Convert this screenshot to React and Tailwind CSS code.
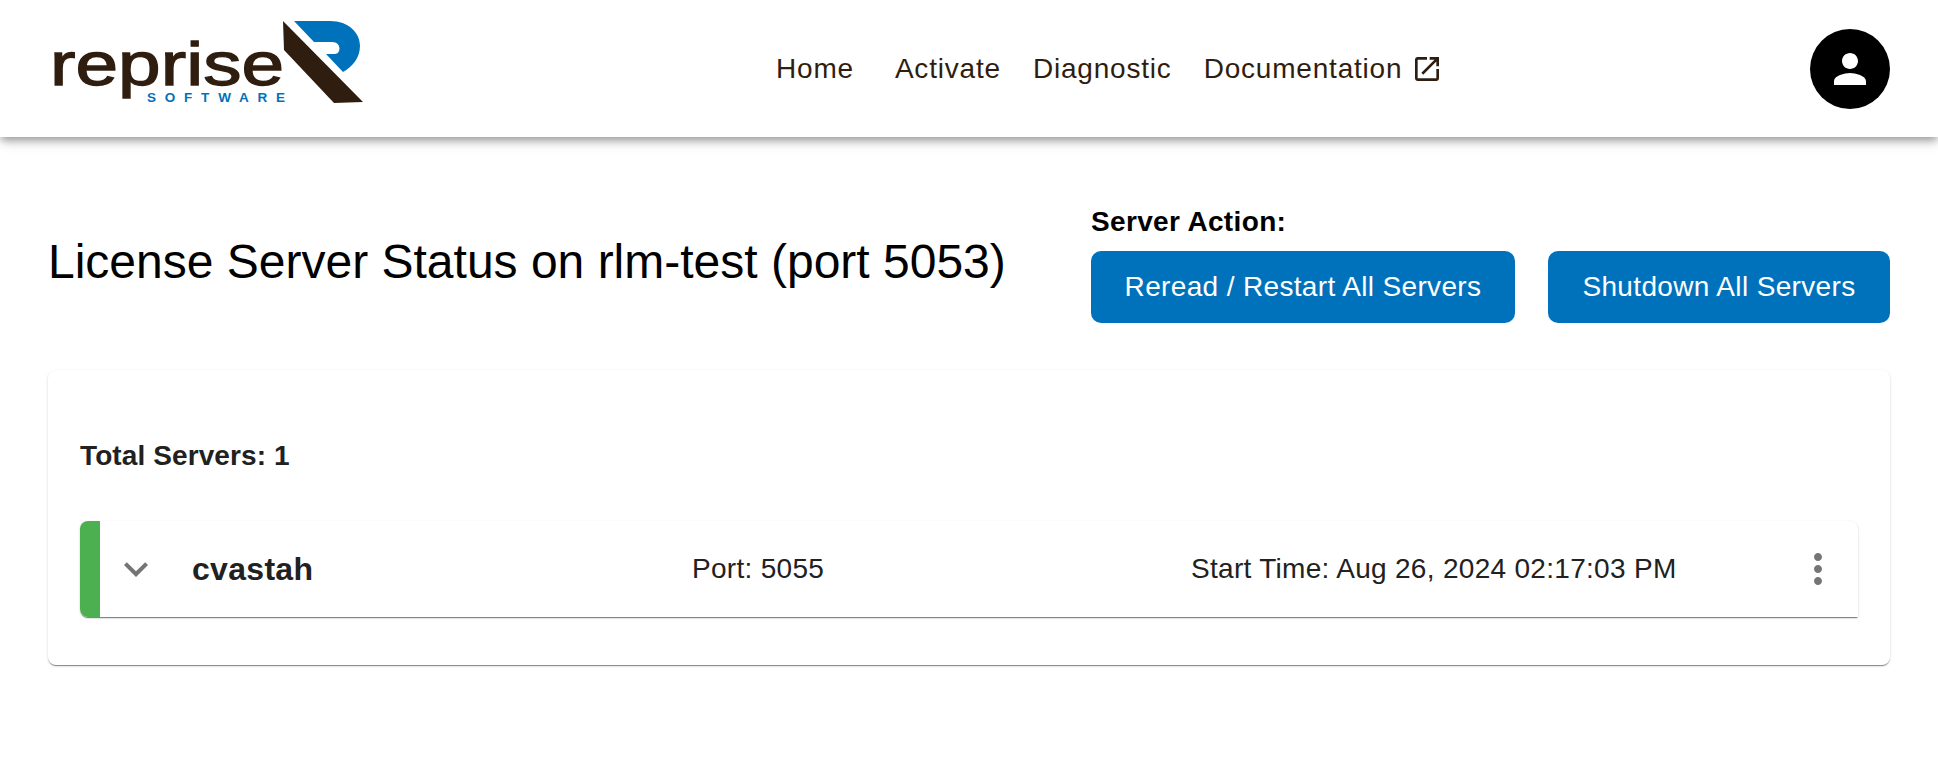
const Logo = () => (
  <svg width="313" height="83" viewBox="50 21 313 83" className="block mb-[12px]">
    <text x="50" y="85" fontSize="61" textLength="234" lengthAdjust="spacingAndGlyphs" fill="#2f1e10" stroke="#2f1e10" strokeWidth="1.3" fontFamily="'Liberation Sans', sans-serif">reprise</text>
    <text x="147" y="102" fontSize="13.5" textLength="138" fontWeight="700" fill="#0072bc" fontFamily="'Liberation Sans', sans-serif">SOFTWARE</text>
    <path d="M283 21L363 102L334 103L284 50Z" fill="#2f1e10" />
    <path d="M294 21H330C349 21 360 33 360 46C360 58 352 67 343 72L326 54H335C341 54 342 42 332 42H314Z" fill="#0072bc" />
  </svg>
);

const ExternalIcon = () => (
  <svg width="32" height="32" viewBox="0 0 24 24" fill="currentColor" className="ml-[9px]">
    <path d="M19 19H5V5h7V3H5c-1.11 0-2 .9-2 2v14c0 1.1.89 2 2 2h14c1.1 0 2-.9 2-2v-7h-2v7zM14 3v2h3.59l-9.83 9.83 1.41 1.41L19 6.41V10h2V3h-7z" />
  </svg>
);

const App = () => {
  return (
    <div className="min-h-[771px] bg-white font-['Liberation_Sans',Arial,sans-serif]">
      {/* Header */}
      <header className="h-[137px] flex items-center pl-[50px] pr-[48px] bg-white shadow-[0_4px_8px_-1px_rgba(0,0,0,0.35),0_6px_12px_0_rgba(0,0,0,0.1)]">
        <Logo />
        <nav className="flex items-center ml-[413px] text-[28px] tracking-[0.8px] text-[#2f1e10]">
          <a>Home</a>
          <a className="ml-[41px]">Activate</a>
          <a className="ml-[32px]">Diagnostic</a>
          <a className="ml-[32px] flex items-center">
            Documentation
            <ExternalIcon />
          </a>
        </nav>
        <div className="ml-auto w-20 h-20 rounded-full bg-black flex items-center justify-center text-white">
          <svg width="48" height="48" viewBox="0 0 24 24" fill="currentColor">
            <path d="M12 12c2.21 0 4-1.79 4-4s-1.79-4-4-4-4 1.79-4 4 1.79 4 4 4zm0 2c-2.67 0-8 1.34-8 4v2h16v-2c0-2.66-5.33-4-8-4z" />
          </svg>
        </div>
      </header>

      <main className="px-[48px]">
        <div className="flex items-end justify-between pt-[67px]">
          <h1 className="text-[48px] leading-[56px] text-black mb-[33px]">License Server Status on rlm-test (port 5053)</h1>
          <div>
            <div className="text-[28px] leading-[36px] font-bold tracking-[0.35px] text-black mb-[11px]">Server Action:</div>
            <div className="flex gap-[33px]">
              <button className="w-[424px] h-[72px] rounded-[10px] bg-[#0072bc] text-white text-[28px] tracking-[0.35px]">Reread / Restart All Servers</button>
              <button className="w-[342px] h-[72px] rounded-[10px] bg-[#0072bc] text-white text-[28px] tracking-[0.35px]">Shutdown All Servers</button>
            </div>
          </div>
        </div>

        {/* Servers card */}
        <section className="mt-[47px] h-[295px] rounded-lg bg-white px-[32px] pt-[70px] text-[#212121] shadow-[0_2px_1px_-1px_rgba(0,0,0,0.3),0_1px_1px_0_rgba(0,0,0,0.18),0_1px_3px_0_rgba(0,0,0,0.12)]">
          <div className="text-[28px] leading-[32px] font-bold tracking-[0.1px]">Total Servers: 1</div>
          <div className="mt-[49px] h-[96px] flex items-center rounded-t-lg rounded-bl-lg overflow-hidden bg-white pr-[16px] shadow-[0_2px_1px_-1px_rgba(0,0,0,0.35),0_1px_1px_0_rgba(0,0,0,0.2),0_1px_3px_0_rgba(0,0,0,0.12)]">
            <div className="w-[20px] self-stretch bg-[#4caf50]" />
            <svg width="48" height="48" viewBox="0 0 24 24" fill="#757575" className="ml-[12px]">
              <path d="M16.59 8.59 12 13.17 7.41 8.59 6 10l6 6 6-6z" />
            </svg>
            <div className="ml-[32px] flex-1 grid grid-cols-[500px_499px_1fr] items-center text-[28px] tracking-[0.3px]">
              <div className="text-[32px] font-bold">cvastah</div>
              <div>Port: 5055</div>
              <div>Start Time: Aug 26, 2024 02:17:03 PM</div>
            </div>
            <svg width="48" height="48" viewBox="0 0 24 24" fill="#757575">
              <path d="M12 8c1.1 0 2-.9 2-2s-.9-2-2-2-2 .9-2 2 .9 2 2 2zm0 2c-1.1 0-2 .9-2 2s.9 2 2 2 2-.9 2-2-.9-2-2-2zm0 6c-1.1 0-2 .9-2 2s.9 2 2 2 2-.9 2-2-.9-2-2-2z" />
            </svg>
          </div>
        </section>
      </main>
    </div>
  );
};

export default App;
